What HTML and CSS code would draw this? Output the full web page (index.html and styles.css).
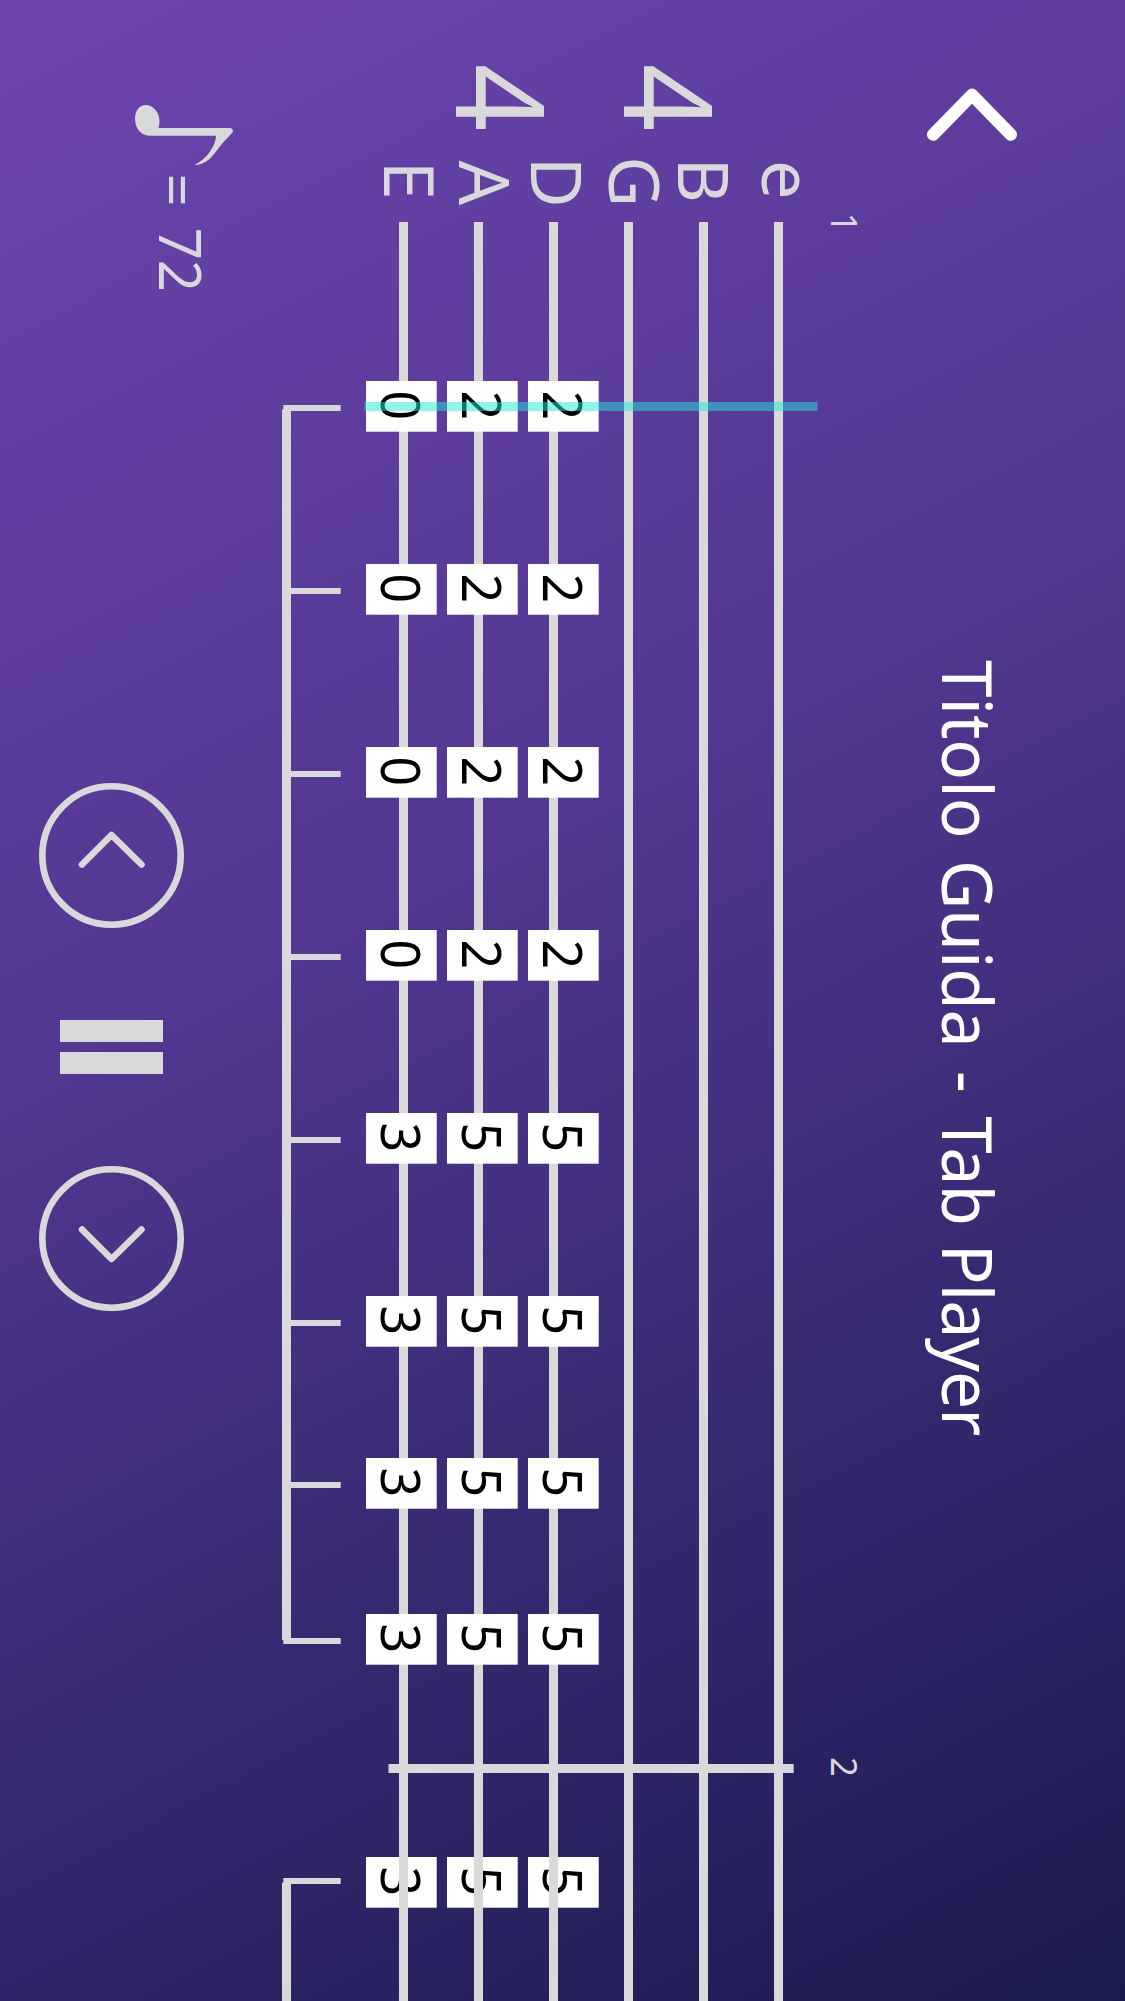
FILE: index.html
```
<!DOCTYPE html>
<html lang="it">
<head>
<meta charset="utf-8">
<title>Tab Player</title>
<link rel="stylesheet" href="styles.css">
</head>
<body>
<main class="player">
  <aside class="panel">
    <svg class="tempo" viewBox="0 0 223 300" role="img" aria-label="Tempo">
      <path class="fill" d="M135 119C135 110 140 105 145.5 105C153 105 159.5 112 159.5 121C159.5 124 159 126 158.5 128H230C232 128 233 130 233 131.5C232 133.5 228 137 225 140.5C219 147 214 155 209 159.5C204 163.5 199 165 194.5 165C202 161 207 156 210 151.5C214 146 216 140 216 135.7H149C141 135.7 135 128 135 119Z"/>
      <text class="bpm" transform="translate(156 173.5) rotate(90)">=</text>
      <text class="bpm" transform="translate(159 227.7) rotate(90) scale(.97 1)">72</text>
    </svg>
    <nav class="controls">
      <button class="round" aria-label="Indietro">
        <svg viewBox="0 0 145 145"><circle cx="72.5" cy="72.5" r="69.2"/><path d="M43 81.5L72.5 52L102.5 81.5"/></svg>
      </button>
      <button class="pause" aria-label="Pausa"><span></span><span></span></button>
      <button class="round" aria-label="Avanti">
        <svg viewBox="0 0 145 145"><circle cx="72.5" cy="72.5" r="69.2"/><path d="M43 63.5L72.5 93L102.5 63.5"/></svg>
      </button>
    </nav>
  </aside>
  <svg class="score" viewBox="223 0 637 2001" id="score">
    <g class="meter">
      <text transform="translate(624 63.8) rotate(90) scale(.96 1)">4</text>
      <text transform="translate(456 63.8) rotate(90) scale(.96 1)">4</text>
    </g>
    <g class="tuning">
      <text transform="translate(762 160) rotate(90)">e</text>
      <text transform="translate(678 157.5) rotate(90)">B</text>
      <text transform="translate(609 156.3) rotate(90)">G</text>
      <text transform="translate(531 156.7) rotate(90)">D</text>
      <text transform="translate(459 160.5) rotate(90)">A</text>
      <text transform="translate(384 160.7) rotate(90)">E</text>
    </g>
    <g class="bar-number">
      <text transform="translate(831 212.7) rotate(90) scale(.96 1)">1</text>
      <text transform="translate(831 1757) rotate(90) scale(.96 1)">2</text>
    </g>
    <g id="next-bar"></g>
    <path class="fill" d="M399 222h9V2001h-9zM474 222h9V2001h-9zM549 222h9V2001h-9zM624 222h9V2001h-9zM699 222h9V2001h-9zM774 222h9V2001h-9z"/>
    <path class="fill" d="M388.5 1764H793.7v9H388.5z"/>
    <path class="fill" d="M282 409.5h9V1640h-9zM282 1882.5h9V2001h-9z"/>
    <g id="first-bar"></g>
    <path class="cursor" d="M364.5 402H817.5v9H364.5z"/>
  </svg>
  <header class="header">
    <svg class="back" viewBox="0 0 90 54" role="img" aria-label="Indietro"><path d="M6.2 47.6L45 7.8L83.8 47.6"/></svg>
    <h1 class="title">Titolo Guida<span class="dash"> - </span><span class="tight">Tab Player</span></h1>
  </header>
</main>
<script src="score.js"></script>
</body>
</html>
```
FILE: styles.css
```
body {
  margin: 0;
  font-family: "Noto Sans", sans-serif;
}

.player {
  display: grid;
  grid-template-columns: 223px 637px 265px;
  height: 2001px;
  overflow: hidden;
  background: linear-gradient(153deg, #6c45af 0%, #543792 41%, #32276b 75%, #1a1a4e 100%);
}

.panel {
  display: flex;
  flex-direction: column;
}

.tempo {
  width: 223px;
  height: 300px;
  overflow: visible;
}

.fill {
  fill: #d9d9d9;
}

.bpm {
  font-size: 58px;
  fill: #d9d9d9;
}

.controls {
  display: flex;
  flex-direction: column;
  align-items: center;
  gap: 92px;
  padding-top: 483px;
}

button {
  padding: 0;
  border: 0;
  background: none;
}

.round {
  width: 145px;
  height: 145px;
}

.round svg {
  display: block;
  fill: none;
  stroke: #d9d9d9;
  stroke-width: 6.6;
  stroke-linecap: round;
  stroke-linejoin: round;
}

.pause {
  display: flex;
  flex-direction: column;
  gap: 10px;
}

.pause span {
  width: 103px;
  height: 22px;
  background: #d9d9d9;
}

.score {
  width: 637px;
  height: 2001px;
  overflow: visible;
}

.meter {
  font-size: 123px;
  fill: #d9d9d9;
}

.tuning {
  font-size: 70px;
  fill: #d9d9d9;
}

.bar-number {
  font-size: 36px;
  fill: #d9d9d9;
}

.stem {
  fill: #d9d9d9;
}

.fret {
  fill: #fff;
}

.fret-label {
  font-size: 54px;
  fill: #000;
}

.cursor {
  fill: #21e8dd;
  fill-opacity: 0.5;
}

.header {
  display: flex;
  flex-direction: column;
  align-items: flex-start;
  padding: 87px 0 0 67px;
}

.back {
  width: 90px;
  height: 54px;
  fill: none;
  stroke: #fff;
  stroke-width: 12.4;
  stroke-linecap: round;
  stroke-linejoin: round;
}

.title {
  margin: 518.5px 0 0 -6px;
  font-size: 70px;
  font-weight: 400;
  line-height: 96px;
  word-spacing: 4px;
  color: #fff;
  writing-mode: vertical-rl;
  white-space: nowrap;
  transform: scaleY(0.965);
  transform-origin: top;
}

.dash {
  word-spacing: 6px;
}

.tight {
  letter-spacing: -0.9px;
  word-spacing: 2px;
}
```
FILE: score.js
```
const columns = [366, 447, 528];

const firstBar = [
  [381, '022'], [564, '022'], [747, '022'], [930, '022'],
  [1113, '355'], [1296, '355'], [1458, '355'], [1614, '355'],
];
const nextBar = [[1857, '355', 21]];

function drawChord([y, frets, stemOffset = 24]) {
  const stem = `<rect class="stem" x="283.3" y="${y + stemOffset}" width="57.4" height="6"/>`;
  const notes = columns.map((x, i) =>
    `<rect class="fret" x="${x}" y="${y}" width="70.7" height="50.7"/>` +
    `<text class="fret-label" transform="translate(${x + 15} ${y + 9.6}) rotate(90) scale(.96 1)">${frets[i]}</text>`);
  return stem + notes.join('');
}

document.getElementById('first-bar').innerHTML = firstBar.map(drawChord).join('');
document.getElementById('next-bar').innerHTML = nextBar.map(drawChord).join('');
```
